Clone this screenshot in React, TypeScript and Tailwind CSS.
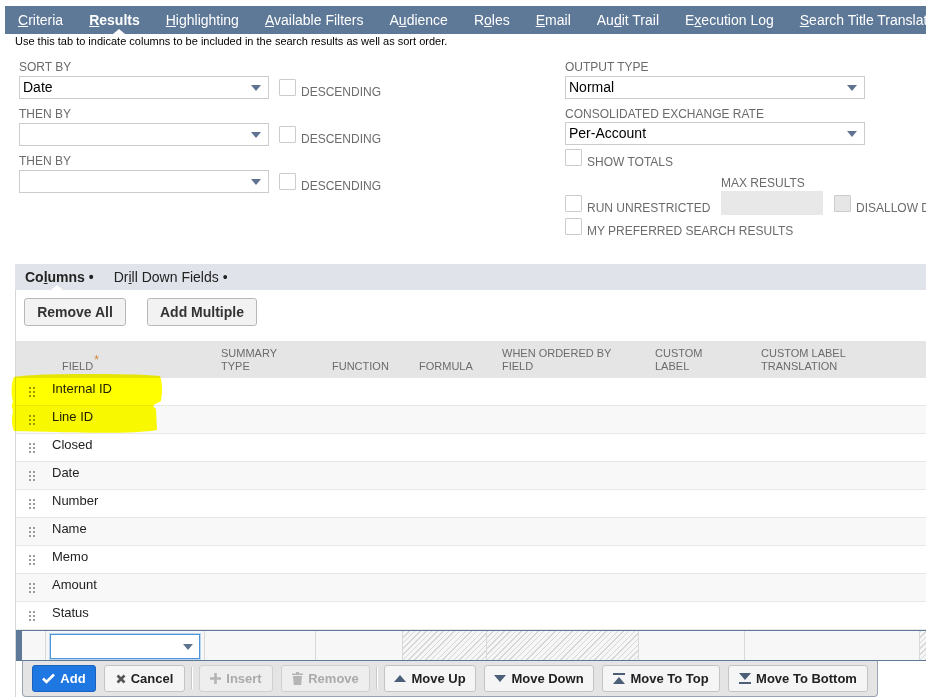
import type { ReactNode } from 'react';

const navItems: [string, number, boolean?][] = [
  ['Criteria', 0],
  ['Results', 0, true],
  ['Highlighting', 0],
  ['Available Filters', 0],
  ['Audience', 1],
  ['Roles', 1],
  ['Email', 0],
  ['Audit Trail', 2],
  ['Execution Log', 1],
  ['Search Title Translation', 0],
];

const rows = ['Internal ID', 'Line ID', 'Closed', 'Date', 'Number', 'Name', 'Memo', 'Amount', 'Status'];

const hatch =
  'bg-[repeating-linear-gradient(135deg,#d6d6d6_0px,#d6d6d6_1px,#f6f6f6_1px,#f6f6f6_4px)]';

function Accel({ text, i }: { text: string; i: number }) {
  return (
    <>
      {text.slice(0, i)}
      <u>{text[i]}</u>
      {text.slice(i + 1)}
    </>
  );
}

function Caret() {
  return (
    <svg width="10" height="6" viewBox="0 0 10 6">
      <path d="M0 0h10L5 6z" fill="#5f7390" />
    </svg>
  );
}

function Label({ children }: { children: ReactNode }) {
  return <div className="text-[12px] leading-[14px] text-[#6b6b6b] uppercase whitespace-nowrap">{children}</div>;
}

function Select({ value, width }: { value?: string; width: string }) {
  return (
    <div className={`${width} shrink-0 h-[23px] border border-[#cccccc] bg-white flex items-center justify-between pl-[3px] pr-[7px] text-[14px] text-black`}>
      <span>{value}</span>
      <Caret />
    </div>
  );
}

function Checkbox({ disabled }: { disabled?: boolean }) {
  return (
    <div
      className={`w-[17px] h-[17px] shrink-0 border border-[#cccccc] rounded-[1px] ${
        disabled ? 'bg-[#e6e6e6]' : 'bg-white'
      }`}
    />
  );
}

function CheckLabel({ text, disabled }: { text: string; disabled?: boolean }) {
  return (
    <div className="flex h-[17px]">
      <Checkbox disabled={disabled} />
      <span className="ml-[5px] pt-[6px] h-[17px] text-[12px] leading-[14px] text-[#6b6b6b] whitespace-nowrap">
        {text}
      </span>
    </div>
  );
}

function SortRow({ label, value }: { label: string; value?: string }) {
  return (
    <div className="mb-[8px]">
      <Label>{label}</Label>
      <div className="flex mt-[2px]">
        <Select value={value} width="w-[250px]" />
        <div className="ml-[10px] mt-[3px]">
          <CheckLabel text="DESCENDING" />
        </div>
      </div>
    </div>
  );
}

function BarButton({
  children,
  icon,
  variant = 'normal',
  width,
}: {
  children: ReactNode;
  icon: ReactNode;
  variant?: 'primary' | 'normal' | 'disabled';
  width: string;
}) {
  const styles = {
    primary: 'bg-[#1f77e2] border-[#1b62bd] text-white',
    normal: 'bg-[#f5f5f5] border-[#c4c4c4] text-[#222222]',
    disabled: 'bg-[#eeeeee] border-[#d0d0d0] text-[#aaaaaa]',
  }[variant];
  return (
    <div
      className={`${width} h-[27px] shrink-0 border rounded-[3px] flex items-center justify-center gap-[5px] text-[13px] font-bold ${styles}`}
    >
      {icon}
      <span>{children}</span>
    </div>
  );
}

function Separator() {
  return <div className="w-[2px] h-[22px] -mx-[2px] mt-[2px] border-l border-[#c8c8c8] bg-white shrink-0" />;
}

export default function App() {
  return (
    <div className="relative w-[926px] h-[697px] overflow-hidden bg-white font-['Liberation_Sans',Arial,sans-serif]">
      {/* Tabs */}
      <div className="pt-[6px] pl-[5px]">
        <nav className="relative h-[28px] bg-[#5e7897] flex items-center pl-[13px] gap-[26px] text-[14px] text-white whitespace-nowrap">
          {navItems.map(([name, i, bold]) => (
            <span key={name} className={bold ? 'font-bold' : ''}>
              <Accel text={name} i={i} />
            </span>
          ))}
          <div className="absolute left-[108px] bottom-0 w-0 h-0 border-l-[6px] border-r-[6px] border-b-[5px] border-l-transparent border-r-transparent border-b-white" />
        </nav>
      </div>
      <p className="pl-[15px] mt-[1px] text-[11px] leading-[12px] text-black whitespace-nowrap">
        Use this tab to indicate columns to be included in the search results as well as sort order.
      </p>

      {/* Sort and output options */}
      <div className="flex mt-[13px]">
        <div className="ml-[19px] w-[546px] shrink-0">
          <SortRow label="Sort By" value="Date" />
          <SortRow label="Then By" />
          <SortRow label="Then By" />
        </div>
        <div className="shrink-0">
          <Label>Output Type</Label>
          <div className="mt-[2px]">
            <Select value="Normal" width="w-[300px]" />
          </div>
          <div className="mt-[8px]">
            <Label>Consolidated Exchange Rate</Label>
          </div>
          <div className="mt-[1px]">
            <Select value="Per-Account" width="w-[300px]" />
          </div>
          <div className="mt-[4px]">
            <CheckLabel text="SHOW TOTALS" />
          </div>
          <div className="flex mt-[10px]">
            <div className="w-[156px] shrink-0 pt-[19px]">
              <CheckLabel text="RUN UNRESTRICTED" />
            </div>
            <div className="w-[102px] shrink-0">
              <Label>Max Results</Label>
              <div className="mt-[1px] h-[24px] bg-[#e8e8e8]" />
            </div>
            <div className="ml-[11px] shrink-0 pt-[19px]">
              <CheckLabel text="DISALLOW DRILLDOWN" disabled />
            </div>
          </div>
          <div className="mt-[3px]">
            <CheckLabel text="MY PREFERRED SEARCH RESULTS" />
          </div>
        </div>
      </div>

      {/* Sublist */}
      <div className="ml-[15px] mt-[29px]">
        <div className="relative h-[26px] bg-[#e0e4ea] flex items-center pl-[10px] gap-[20px] text-[14px] text-[#222222]">
          <span className="font-bold">
            Co<u>l</u>umns •
          </span>
          <span>
            Dr<u>i</u>ll Down Fields •
          </span>
          <div className="absolute left-[36px] bottom-0 w-0 h-0 border-l-[6px] border-r-[6px] border-b-[5px] border-l-transparent border-r-transparent border-b-white" />
        </div>

        <div className="border-l border-[#d6d6d6]">
          <div className="flex gap-[21px] pl-[8px] pt-[8px]">
            <div className="w-[102px] h-[28px] border border-[#b8b8b8] rounded-[3px] bg-[#f2f2f2] flex items-center justify-center text-[14px] font-bold text-[#333333]">
              Remove All
            </div>
            <div className="w-[110px] h-[28px] border border-[#b8b8b8] rounded-[3px] bg-[#f2f2f2] flex items-center justify-center text-[14px] font-bold text-[#333333]">
              Add Multiple
            </div>
          </div>

          {/* Header */}
          <div className="mt-[15px] h-[37px] bg-[#e5e5e5] flex items-end pb-[5px] text-[11px] leading-[13px] text-[#6b6b6b] uppercase whitespace-nowrap">
            <div className="w-[30px] shrink-0" />
            <div className="w-[159px] shrink-0 pl-[16px]">
              Field<sup className="text-[#d2873d] text-[12px] ml-[1px]">*</sup>
            </div>
            <div className="w-[111px] shrink-0 pl-[16px]">
              Summary
              <br />
              Type
            </div>
            <div className="w-[87px] shrink-0 pl-[16px]">Function</div>
            <div className="w-[84px] shrink-0 pl-[16px]">Formula</div>
            <div className="w-[152px] shrink-0 pl-[15px]">
              When Ordered By
              <br />
              Field
            </div>
            <div className="w-[106px] shrink-0 pl-[16px]">
              Custom
              <br />
              Label
            </div>
            <div className="w-[175px] shrink-0 pl-[16px]">
              Custom Label
              <br />
              Translation
            </div>
          </div>

          {/* Rows */}
          {rows.map((r, idx) => (
            <div
              key={r}
              className={`h-[28px] flex border-b border-[#e8e8e8] ${idx % 2 === 0 ? 'bg-white' : 'bg-[#f8f8f8]'}`}
            >
              <div className="w-[30px] shrink-0 pl-[13px] pt-[9px]">
                <div className="grid grid-cols-2 gap-[2px] w-[6px]">
                  {Array.from({ length: 6 }).map((_, d) => (
                    <div key={d} className="w-[2px] h-[2px] bg-[#9a9a9a]" />
                  ))}
                </div>
              </div>
              <div className="pl-[6px] pt-[3px] text-[13px] leading-[15px] text-[#222222]">{r}</div>
            </div>
          ))}

          {/* Edit row */}
          <div className="h-[31px] flex border-t border-b border-[#5e7897] bg-[#f7f7f7]">
            <div className="w-[6px] shrink-0 bg-[#5e7897]" />
            <div className="w-[24px] shrink-0 border-r border-[#d9d9d9]" />
            <div className="w-[159px] shrink-0 border-r border-[#d9d9d9] pl-[4px] pt-[3px]">
              <div className="w-[150px] h-[25px] bg-white border border-[#4f94d9] shadow-[0_0_0_1px_#b9d6f2] flex items-center justify-end pr-[6px]">
                <Caret />
              </div>
            </div>
            <div className="w-[111px] shrink-0 border-r border-[#d9d9d9]" />
            <div className="w-[87px] shrink-0 border-r border-[#d9d9d9]" />
            <div className={`w-[84px] shrink-0 border-r border-[#d9d9d9] ${hatch}`} />
            <div className={`w-[152px] shrink-0 border-r border-[#d9d9d9] ${hatch}`} />
            <div className="w-[106px] shrink-0 border-r border-[#d9d9d9]" />
            <div className="w-[175px] shrink-0 border-r border-[#d9d9d9]" />
            <div className={`flex-1 ${hatch}`} />
          </div>

          {/* Button bar */}
          <div className="ml-[6px] w-[856px] h-[36px] bg-[#e4e4e4] border-l border-r border-b border-[#98a3b3] rounded-b-[4px] flex items-start pt-[4px] pl-[9px] gap-[8px]">
            <BarButton
              variant="primary"
              width="w-[64px]"
              icon={
                <svg width="13" height="11" viewBox="0 0 13 11">
                  <path d="M1 5.5l3.5 3.5L12 1.5" fill="none" stroke="white" strokeWidth="2.6" />
                </svg>
              }
            >
              Add
            </BarButton>
            <BarButton
              width="w-[81px]"
              icon={
                <svg width="10" height="10" viewBox="0 0 10 10">
                  <path d="M1.5 1.5l7 7M8.5 1.5l-7 7" stroke="#555555" strokeWidth="2.6" />
                </svg>
              }
            >
              Cancel
            </BarButton>
            <Separator />
            <BarButton
              variant="disabled"
              width="w-[74px]"
              icon={
                <svg width="11" height="11" viewBox="0 0 11 11">
                  <path d="M5.5 0v11M0 5.5h11" stroke="#b5b5b5" strokeWidth="2.6" />
                </svg>
              }
            >
              Insert
            </BarButton>
            <BarButton
              variant="disabled"
              width="w-[89px]"
              icon={
                <svg width="11" height="13" viewBox="0 0 11 13">
                  <path d="M0 1.5h11v1.5H0zM4 0h3v1.5H4zM1 4h9l-0.8 9H1.8z" fill="#b5b5b5" />
                </svg>
              }
            >
              Remove
            </BarButton>
            <Separator />
            <BarButton
              width="w-[92px]"
              icon={
                <svg width="12" height="7" viewBox="0 0 12 7">
                  <path d="M0 7L6 0l6 7z" fill="#4d5f78" />
                </svg>
              }
            >
              Move Up
            </BarButton>
            <BarButton
              width="w-[110px]"
              icon={
                <svg width="12" height="7" viewBox="0 0 12 7">
                  <path d="M0 0h12L6 7z" fill="#4d5f78" />
                </svg>
              }
            >
              Move Down
            </BarButton>
            <BarButton
              width="w-[118px]"
              icon={
                <svg width="12" height="11" viewBox="0 0 12 11">
                  <path d="M0 0h12v2H0zM0 11L6 4l6 7z" fill="#4d5f78" />
                </svg>
              }
            >
              Move To Top
            </BarButton>
            <BarButton
              width="w-[140px]"
              icon={
                <svg width="12" height="11" viewBox="0 0 12 11">
                  <path d="M0 0h12L6 7zM0 9h12v2H0z" fill="#4d5f78" />
                </svg>
              }
            >
              Move To Bottom
            </BarButton>
          </div>
        </div>
      </div>

      {/* Yellow highlighter annotation */}
      <svg
        className="absolute left-0 top-[370px] mix-blend-multiply pointer-events-none"
        width="180"
        height="70"
        viewBox="0 0 180 70"
      >
        <path
          d="M14 7 C40 3 120 4 146 5 L160 6 C163 14 162 24 161 31 C156 34 150 35 156 39 L157 60 C130 65 60 62 14 61 C11 55 12 46 13 40 C11 36 12 34 13 32 C11 24 11 14 14 7 Z"
          fill="#ffff00"
        />
      </svg>
    </div>
  );
}
